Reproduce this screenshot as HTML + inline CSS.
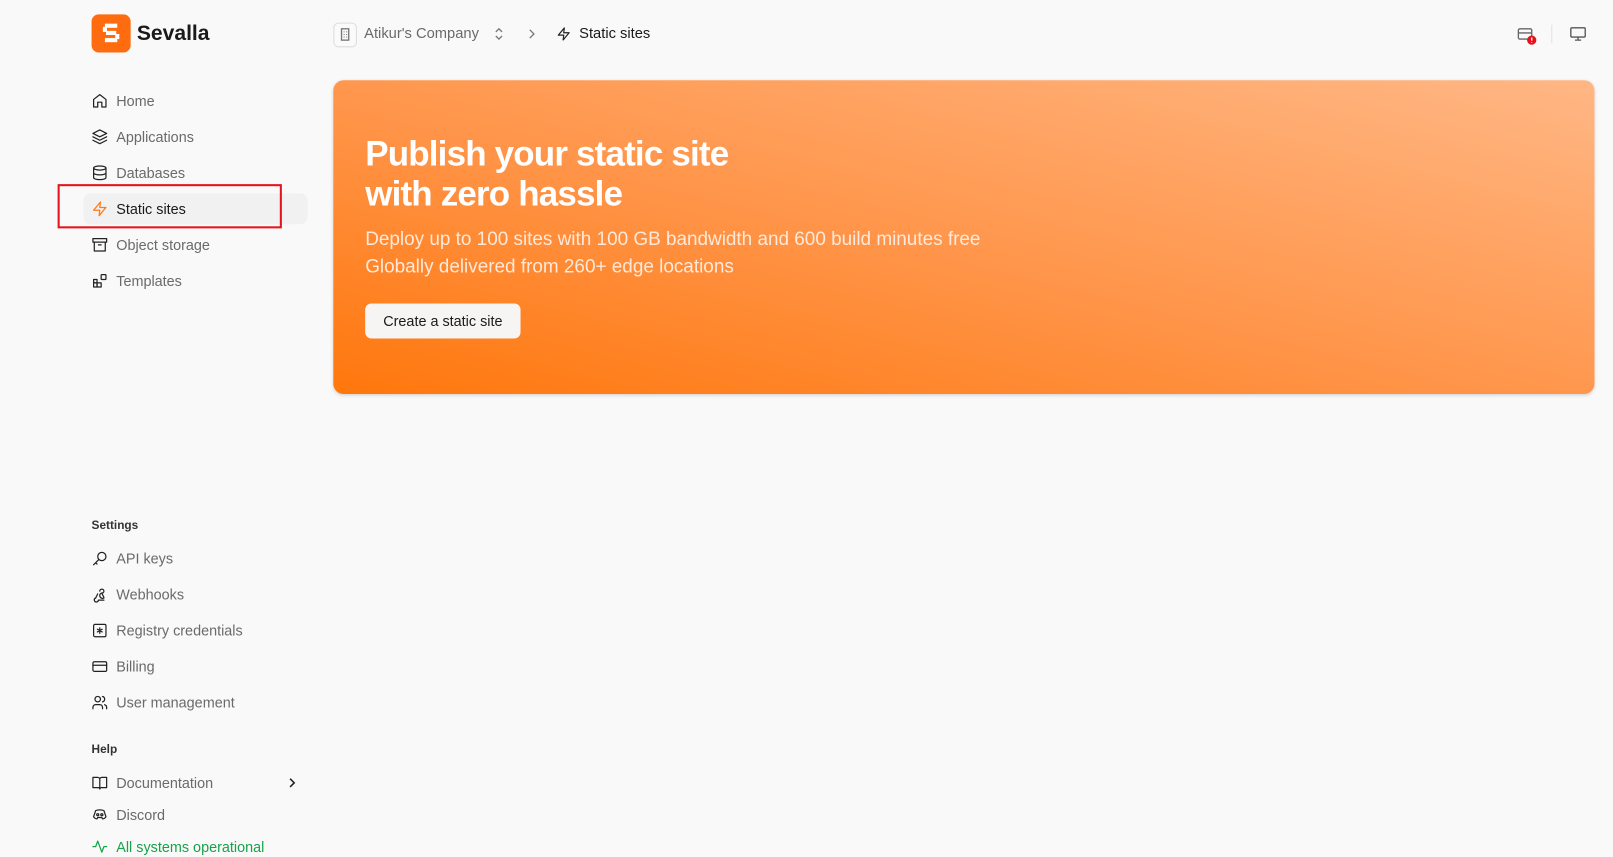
<!DOCTYPE html>
<html><head><meta charset="utf-8"><style>
html,body{margin:0;padding:0;background:#f9f9f9;overflow:hidden;width:1613px;height:857px}
#w{position:absolute;left:0;top:0;width:1568px;height:833px;transform:scale(1.0287);transform-origin:0 0;font-family:"Liberation Sans",sans-serif}
.a{position:absolute}
.nav{position:absolute;left:89px;font-size:14px;color:#6a6a6a;display:flex;align-items:center;height:20px}
.nav svg{width:16px;height:16px;margin-right:8px;stroke:#222;fill:none;stroke-width:1.8;stroke-linecap:round;stroke-linejoin:round}
.sec{position:absolute;left:89px;font-size:11.5px;color:#333;font-weight:bold}
</style></head><body><div id="w">
<div class="a" style="left:89px;top:14px;width:38px;height:37px;background:#ff6b0f;border-radius:7px">
<svg width="38" height="37" viewBox="0 0 38 37"><g fill="#fff"><rect x="13" y="9" width="12" height="4"/><rect x="11" y="12" width="4" height="5"/><rect x="14" y="16" width="10" height="4"/><rect x="23" y="19" width="4" height="5"/><rect x="13" y="23" width="12" height="4"/></g></svg></div>
<div class="a" style="left:133px;top:21px;font-size:20.5px;color:#1a1a1a;font-weight:bold">Sevalla</div>

<div class="a" style="left:324px;top:22px;width:21px;height:22px;border:1px solid #ddd;border-radius:5px;background:#fafafa"><svg width="21" height="22" viewBox="0 0 21 22"><rect x="7" y="5" width="7" height="11" fill="none" stroke="#777" stroke-width="1.3"/><path d="M9 8h1M11.5 8h1M9 10.5h1M11.5 10.5h1M9 13h1M11.5 13h1" stroke="#777"/></svg></div>
<div class="a" style="left:354px;top:25px;font-size:14.3px;color:#6a6a6a">Atikur's Company</div>
<svg class="a" style="left:479px;top:26px" width="12" height="14" viewBox="0 0 12 14"><path d="M3 5l3-3 3 3M3 9l3 3 3-3" fill="none" stroke="#777" stroke-width="1.3"/></svg>
<svg class="a" style="left:512px;top:27px" width="10" height="12" viewBox="0 0 10 12"><path d="M3 2l4 4-4 4" fill="none" stroke="#777" stroke-width="1.3"/></svg>
<svg class="a" style="left:541px;top:26px" width="14" height="14" viewBox="0 0 24 24"><path d="M13 2L3 14h9l-1 8 10-12h-9l1-8z" fill="none" stroke="#222" stroke-width="2" stroke-linejoin="round"/></svg>
<div class="a" style="left:563px;top:25px;font-size:14.3px;color:#1a1a1a">Static sites</div>

<svg class="a" style="left:1475px;top:26px" width="20" height="20" viewBox="0 0 20 20"><rect x="1" y="2" width="13" height="10" rx="1.5" fill="none" stroke="#666" stroke-width="1.3"/><path d="M1 6h13" stroke="#666" stroke-width="1.3"/><circle cx="14" cy="13" r="4.5" fill="#e8101a"/><path d="M14 10.5v3M14 15v.6" stroke="#fff" stroke-width="1.3"/></svg>
<div class="a" style="left:1508px;top:24px;width:1px;height:18px;background:#e2e2e2"></div>
<svg class="a" style="left:1526px;top:26px" width="16" height="14" viewBox="0 0 16 14"><rect x="1" y="1" width="14" height="9" rx="1" fill="none" stroke="#555" stroke-width="1.3"/><path d="M8 10v3M5 13h6" stroke="#555" stroke-width="1.3"/></svg>

<div class="a" style="left:81px;top:188px;width:218px;height:30px;background:#f1f1f1;border-radius:7px"></div>
<div class="a" style="left:56px;top:179px;width:214px;height:39px;border:2px solid #e5131b"></div>

<div class="nav" style="top:88px"><svg viewBox="0 0 24 24"><path d="M3 10l9-7 9 7v11h-6v-7H9v7H3z"/></svg>Home</div>
<div class="nav" style="top:123px"><svg viewBox="0 0 24 24"><path d="M12 2l10 5-10 5L2 7z M2 12l10 5 10-5 M2 17l10 5 10-5"/></svg>Applications</div>
<div class="nav" style="top:158px"><svg viewBox="0 0 24 24"><ellipse cx="12" cy="5" rx="9" ry="3"/><path d="M3 5v14c0 1.7 4 3 9 3s9-1.3 9-3V5M3 12c0 1.7 4 3 9 3s9-1.3 9-3"/></svg>Databases</div>
<div class="nav" style="top:193px;color:#1a1a1a"><svg viewBox="0 0 24 24" style="stroke:#ff7a1a"><path d="M13 2L3 14h9l-1 8 10-12h-9l1-8z"/></svg>Static sites</div>
<div class="nav" style="top:228px"><svg viewBox="0 0 24 24"><rect x="2" y="3" width="20" height="5"/><path d="M4 8v13h16V8M10 12h4"/></svg>Object storage</div>
<div class="nav" style="top:263px"><svg viewBox="0 0 24 24"><rect x="3" y="10" width="5" height="5"/><rect x="3" y="15" width="5" height="6"/><rect x="8" y="15" width="6" height="6"/><rect x="14" y="3" width="7" height="7" rx="1"/></svg>Templates</div>

<div class="sec" style="top:505px">Settings</div>
<div class="nav" style="top:533px"><svg viewBox="0 0 24 24"><circle cx="15" cy="9" r="6"/><path d="M10.5 13.5L3 21M6 18l2 2"/></svg>API keys</div>
<div class="nav" style="top:568px"><svg viewBox="0 0 24 24"><path d="M18 16.9A4 4 0 1 1 16 9.5M9 11l-3 6a3 3 0 1 0 4 3h8M12 7a3 3 0 1 1 3 3l3 6"/></svg>Webhooks</div>
<div class="nav" style="top:603px"><svg viewBox="0 0 24 24"><rect x="3" y="3" width="18" height="18" rx="2"/><path d="M12 8v8M8.5 10l7 4M15.5 10l-7 4"/></svg>Registry credentials</div>
<div class="nav" style="top:638px"><svg viewBox="0 0 24 24"><rect x="2" y="5" width="20" height="14" rx="2"/><path d="M2 10h20"/></svg>Billing</div>
<div class="nav" style="top:673px"><svg viewBox="0 0 24 24"><circle cx="9" cy="7" r="4"/><path d="M2 21v-2a4 4 0 0 1 4-4h6a4 4 0 0 1 4 4v2M16 3.1a4 4 0 0 1 0 7.8M22 21v-2a4 4 0 0 0-3-3.9"/></svg>User management</div>

<div class="sec" style="top:723px">Help</div>
<div class="nav" style="top:751px"><svg viewBox="0 0 24 24"><path d="M2 4h7a3 3 0 0 1 3 3v14a2 2 0 0 0-2-2H2zM22 4h-7a3 3 0 0 0-3 3v14a2 2 0 0 1 2-2h8z"/></svg>Documentation</div>
<svg class="a" style="left:279px;top:755px" width="10" height="12" viewBox="0 0 10 12"><path d="M3 2l4 4-4 4" fill="none" stroke="#222" stroke-width="1.5"/></svg>
<div class="nav" style="top:782px"><svg viewBox="0 0 24 24"><path d="M6 6c3-1.5 9-1.5 12 0l3 9c-2 3-5 3-5 3l-1-2H9l-1 2s-3 0-5-3z"/><circle cx="9" cy="12" r="1.5"/><circle cx="15" cy="12" r="1.5"/></svg>Discord</div>
<div class="nav" style="top:813px;color:#17a34a"><svg viewBox="0 0 24 24" style="stroke:#17a34a"><path d="M2 12h4l3-8 6 16 3-8h4"/></svg>All systems operational</div>

<div class="a" style="left:324px;top:78px;width:1226px;height:305px;border-radius:10px;background:linear-gradient(to top right,#ff770c 0%,#ff9448 45%,#ffb785 100%);box-shadow:0 1px 3px rgba(0,0,0,.15)"></div>
<div class="a" style="left:355px;top:131px;font-size:34px;line-height:39px;font-weight:bold;color:#fff;letter-spacing:-0.8px">Publish your static site<br>with zero hassle</div>
<div class="a" style="left:355px;top:218px;font-size:18.4px;line-height:27px;color:#ffe9da">Deploy up to 100 sites with 100 GB bandwidth and 600 build minutes free<br>Globally delivered from 260+ edge locations</div>
<div class="a" style="left:355px;top:295px;width:151px;height:34px;background:#f6f5f3;border-radius:6px;font-size:14px;color:#1a1a1a;text-align:center;line-height:34px">Create a static site</div>
</div></body></html>
